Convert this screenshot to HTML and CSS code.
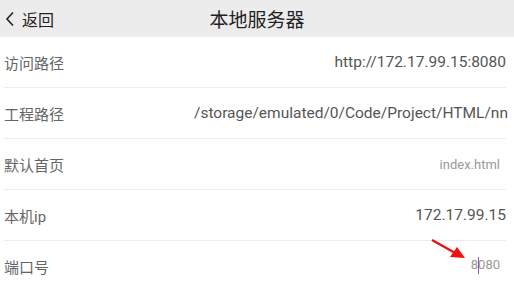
FILE: index.html
```html
<!DOCTYPE html>
<html lang="zh-CN">
<head>
    <meta charset="UTF-8">
    <meta name="viewport" content="width=device-width, initial-scale=1.0">
    <title>本地服务器</title>
    <link rel="stylesheet" href="styles.css">
</head>
<body>

<div class="header">
    <div class="back">
        <svg class="chevron" width="10" height="16" viewBox="0 0 10 16">
            <path d="M8 1.5 L2 8 L8 14.5" fill="none" stroke="#222" stroke-width="1.6"/>
        </svg>
        <span>返回</span>
    </div>
    <div class="title">本地服务器</div>
</div>

<div class="list">
    <div class="row">
        <span class="label">访问路径</span>
        <span class="value">http://172.17.99.15:8080</span>
    </div>
    <div class="row">
        <span class="label">工程路径</span>
        <span class="value path">/storage/emulated/0/Code/Project/HTML/nn</span>
    </div>
    <div class="row">
        <span class="label">默认首页</span>
        <span class="value small">index.html</span>
    </div>
    <div class="row">
        <span class="label">本机ip</span>
        <span class="value">172.17.99.15</span>
    </div>
    <div class="row last">
        <span class="label">端口号</span>
        <span class="value small port">8<i class="caret"></i>080</span>
    </div>
</div>

<!-- annotation arrow -->
<svg class="arrow" width="40" height="26" viewBox="0 0 40 26">
    <line x1="1" y1="1" x2="26" y2="15" stroke="#f01010" stroke-width="2.4"/>
    <polygon points="34,19 19,18 26,8" fill="#f01010"/>
</svg>

</body>
</html>
```

FILE: styles.css
```css
body {
    margin: 0;
    font-family: Roboto, "Noto Sans CJK SC", sans-serif;
    background: #fff;
    position: relative;
    overflow: hidden;
}
.header {
    height: 37px;
    background-color: #ececec;
    position: relative;
    display: flex;
    align-items: center;
}
.back {
    display: flex;
    align-items: center;
    padding-left: 5px;
    font-size: 16px;
    color: #222;
}
.chevron {
    margin-right: 7px;
}
.title {
    position: absolute;
    left: 0;
    right: 0;
    text-align: center;
    font-size: 19px;
    color: #222;
    pointer-events: none;
}
.list {
    padding: 0 8px 0 4px;
}
.row {
    height: 50px;
    display: flex;
    align-items: center;
    justify-content: space-between;
    border-bottom: 1px solid #ececec;
    white-space: nowrap;
}
.row.last {
    border-bottom: none;
}
.label {
    font-size: 15px;
    color: #666;
}
.value {
    font-size: 15.5px;
    color: #555;
}
.value.small {
    font-size: 13px;
    color: #999;
    margin-right: 6px;
}
.value.path {
    width: 320px;
    overflow: hidden;
    margin-right: -8px;
}
.caret {
    display: inline-block;
    width: 1px;
    height: 17px;
    background: #8a5aa8;
    vertical-align: middle;
    margin: 0 -0.5px;
    position: relative;
    top: -1px;
}
.arrow {
    position: absolute;
    left: 431px;
    top: 239px;
}
```
